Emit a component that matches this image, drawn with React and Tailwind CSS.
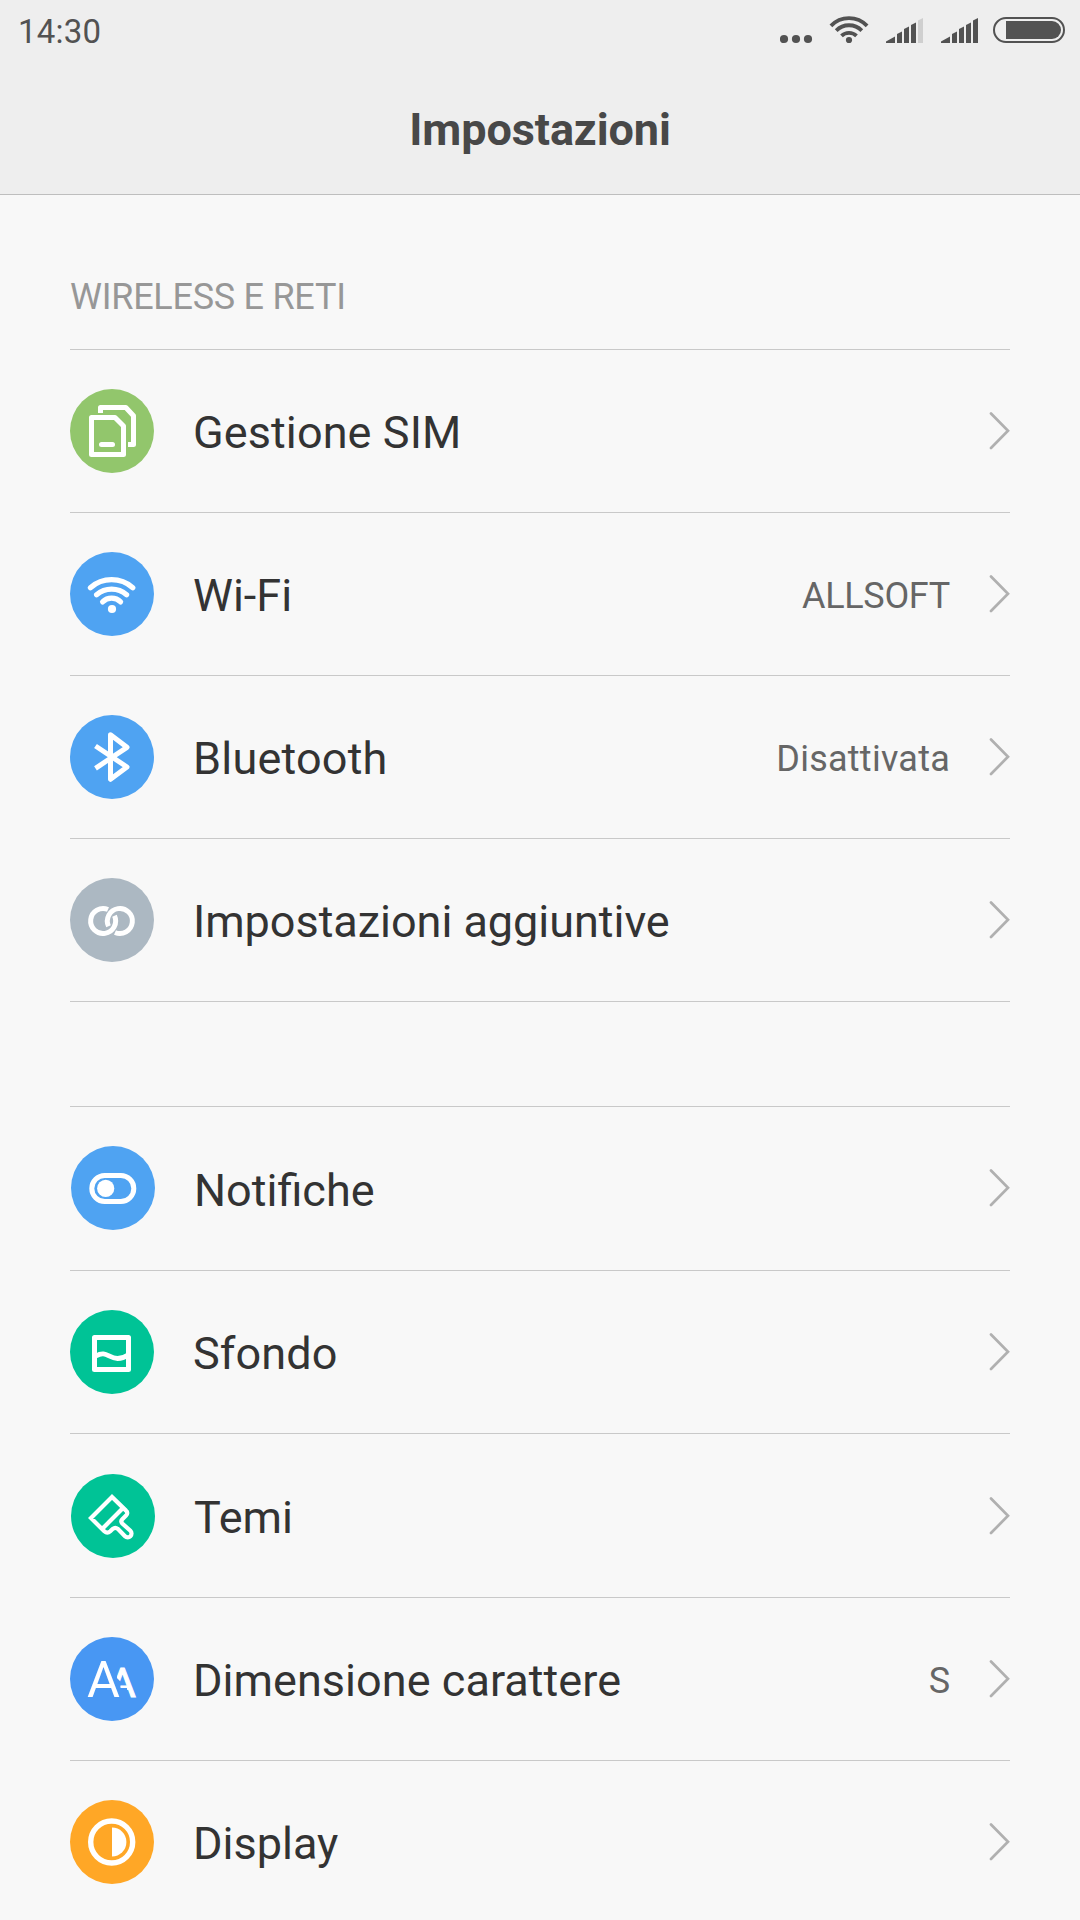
import React from 'react';

const SimIcon = () => (
  <g fill="none" stroke="#fff" strokeWidth="5" strokeLinejoin="round">
    <path d="M30.5 24V18.5H55.8L63.5 26.8V55.5H58" />
    <path d="M21.5 28.5H45L53.5 37V65.5H21.5Z" />
    <path d="M31.5 55.5H42.5" strokeLinecap="round" />
  </g>
);

const WifiIcon = () => (
  <g fill="none" stroke="#fff" strokeWidth="5.2" strokeLinecap="round">
    <path d="M20.4 35.7A32 32 0 0 1 62.8 35.7" />
    <path d="M26.6 42.7A23 23 0 0 1 56.6 42.7" />
    <path d="M32.6 49.9A12.8 12.8 0 0 1 50.6 49.9" />
    <circle cx="42" cy="57" r="4.1" fill="#fff" stroke="none" />
  </g>
);

const BluetoothIcon = () => (
  <path
    d="M25.5 31L57 52L40.5 64.3V19.7L57 32.3L25.5 53.3"
    fill="none"
    stroke="#fff"
    strokeWidth="5"
    strokeLinejoin="round"
  />
);

const LinkIcon = () => (
  <g fill="none" stroke="#fff" strokeWidth="5">
    <path d="M38 31.5A12.5 12.5 0 1 0 44.5 37.8" />
    <path d="M38.5 48.2A12.5 12.5 0 1 1 45 54.5" />
  </g>
);

const ToggleIcon = () => (
  <g>
    <rect x="20.8" y="29.5" width="42" height="26" rx="13" fill="none" stroke="#fff" strokeWidth="5" />
    <circle cx="34.7" cy="42.4" r="8.6" fill="#fff" />
  </g>
);

const WallpaperIcon = () => (
  <g fill="none" stroke="#fff" strokeWidth="5" strokeLinejoin="round">
    <rect x="24.5" y="27.5" width="34" height="32" />
    <path d="M26 46C36 40 38.5 48.5 47.5 48.5C52 48.5 54.5 47.5 58 45" strokeWidth="4.8" />
  </g>
);

const BrushIcon = () => (
  <g fill="none" stroke="#fff" strokeWidth="4.2">
    <path d="M41 23L20 44L33.3 57.3Q36.3 60 39.3 57.3L41.8 54.8Q44.3 52.8 46.8 54.8L54 62.2A3.8 3.8 0 0 0 59.4 56.8L51.3 49.5Q49.3 47.3 51.3 45.2L55 41.6Q57.6 38.8 55 36.6Z" />
    <path d="M51.5 34.5L31.3 54.8" />
  </g>
);

const FontIcon = () => (
  <g className="font-[Roboto,sans-serif]" fill="#fff" textAnchor="middle">
    <clipPath id="small-a">
      <path d="M47 28H68V62H57V51H50.5V45.8H52L49.5 43.5L47 41Z" />
    </clipPath>
    <text x="52.4" y="60" fontSize="41" strokeWidth="1.1" stroke="#fff" clipPath="url(#small-a)">A</text>
    <text x="33.5" y="60" fontSize="50.5" stroke="#4897f3" strokeWidth="4" paintOrder="stroke">A</text>
  </g>
);

const DisplayIcon = () => (
  <g>
    <circle cx="41.7" cy="42" r="21" fill="none" stroke="#fff" strokeWidth="5.4" />
    <path d="M42 27.6A14.4 14.4 0 0 1 42 56.4Z" fill="#fff" />
  </g>
);

const Signal = ({ lastBar }) => (
  <svg width="55" height="50" fill="#525252">
    <path d="M8 43V41.5L17 36.5V43Z" />
    <path d="M19 43V34L24 31.5V43Z" />
    <path d="M26 43V29L31 26.5V43Z" />
    <path d="M33 43V25L38 22.5V43Z" />
    <path d="M40 43V20.5L45 18V43Z" fill={lastBar} />
  </svg>
);

const StatusBar = () => (
  <div className="flex h-[50px] justify-between">
    <span className="pl-[18px] pt-[13px] text-[33px] leading-[38px] tracking-[0.2px] text-[#525252]">14:30</span>
    <div className="flex">
      <svg width="40" height="50" fill="#525252">
        <circle cx="4" cy="39" r="4.1" />
        <circle cx="16" cy="39" r="4.1" />
        <circle cx="28" cy="39" r="4.1" />
      </svg>
      <svg width="58" height="50" fill="none" stroke="#525252" strokeWidth="3.8">
        <path d="M10.9 25.9A25 25 0 0 1 47.1 25.9" />
        <path d="M16.2 30.6A18 18 0 0 1 41.8 30.6" />
        <path d="M21.5 35.9A10.8 10.8 0 0 1 36.5 35.9" />
        <circle cx="29" cy="40" r="3.1" fill="#525252" stroke="none" />
      </svg>
      <Signal lastBar="#cfcfcf" />
      <Signal lastBar="#525252" />
      <svg width="92" height="50">
        <rect x="6" y="18" width="70" height="24" rx="12" fill="none" stroke="#525252" strokeWidth="2" />
        <path d="M18 21H64A9 9 0 0 1 64 39H18Z" fill="#525252" />
      </svg>
    </div>
  </div>
);

const wirelessItems = [
  { label: 'Gestione SIM', color: '#92c66c', icon: SimIcon, tracking: 'tracking-[0.1px]' },
  { label: 'Wi-Fi', value: 'ALLSOFT', color: '#4fa3f2', icon: WifiIcon, valueTracking: 'tracking-[-0.3px]' },
  {
    label: 'Bluetooth',
    value: 'Disattivata',
    color: '#4fa3f2',
    icon: BluetoothIcon,
    tracking: 'tracking-[0.2px]',
    valueTracking: 'tracking-[0.25px]',
  },
  { label: 'Impostazioni aggiuntive', color: '#acb8c2', icon: LinkIcon, tracking: 'tracking-[-0.04px]' },
];

const deviceItems = [
  {
    label: 'Notifiche',
    color: '#4fa3f2',
    icon: ToggleIcon,
    className: 'h-[164px] pl-px pb-px',
    // letter-spacing would switch the fi ligature off
    tracking: '[font-variant-ligatures:common-ligatures] translate-y-px',
  },
  { label: 'Sfondo', color: '#00c396', icon: WallpaperIcon, tracking: 'tracking-[0.1px]' },
  { label: 'Temi', color: '#00c396', icon: BrushIcon, className: 'h-[164px] pl-px', tracking: 'translate-y-px' },
  { label: 'Dimensione carattere', value: 'S', color: '#4897f3', icon: FontIcon, tracking: 'tracking-[0.04px]' },
  { label: 'Display', color: '#ffa726', icon: DisplayIcon },
];

const SettingsRow = ({
  label,
  value,
  color,
  icon: Icon,
  className = 'h-[163px]',
  tracking = '',
  valueTracking = '',
}) => (
  <li className={`flex items-center border-b border-[#c9c9c9] ${className}`}>
    <svg width="84" height="84" className="shrink-0">
      <circle cx="42" cy="42" r="42" fill={color} />
      <Icon />
    </svg>
    <span className={`grow pl-[39px] pt-[3px] text-[45px] leading-[54px] text-[#333333] ${tracking}`}>{label}</span>
    {value && (
      <span className={`pt-[3px] text-[36px] leading-[42px] text-[#666666] ${valueTracking}`}>{value}</span>
    )}
    <svg width="22" height="38" className="ml-[38px] shrink-0">
      <path d="M3 1.5L20 18.8L3 36" fill="none" stroke="#b0b0b0" strokeWidth="2.7" strokeLinecap="round" />
    </svg>
  </li>
);

const SettingsList = ({ items }) => (
  <ul className="mx-[70px] border-t border-[#c9c9c9]">
    {items.map((item) => (
      <SettingsRow key={item.label} {...item} />
    ))}
  </ul>
);

const App = () => {
  return (
    <div className="flex h-[1920px] w-[1080px] flex-col overflow-hidden bg-[#f8f8f8] font-[Roboto,sans-serif]">
      <header className="h-[195px] shrink-0 border-b border-[#bebebe] bg-[#eeeeee]">
        <StatusBar />
        <h1 className="pt-[53px] text-center text-[45px] font-bold leading-[54px] tracking-[-0.1px] text-[#484848]">
          Impostazioni
        </h1>
      </header>

      {/* Wireless */}
      <h2 className="mx-[70px] mt-[81px] h-[73px] shrink-0 text-[36px] leading-[42px] tracking-[-0.26px] text-[#979797]">
        WIRELESS E RETI
      </h2>
      <SettingsList items={wirelessItems} />

      {/* Device */}
      <div className="h-[104px] shrink-0" />
      <SettingsList items={deviceItems} />
    </div>
  );
};

export default App;
